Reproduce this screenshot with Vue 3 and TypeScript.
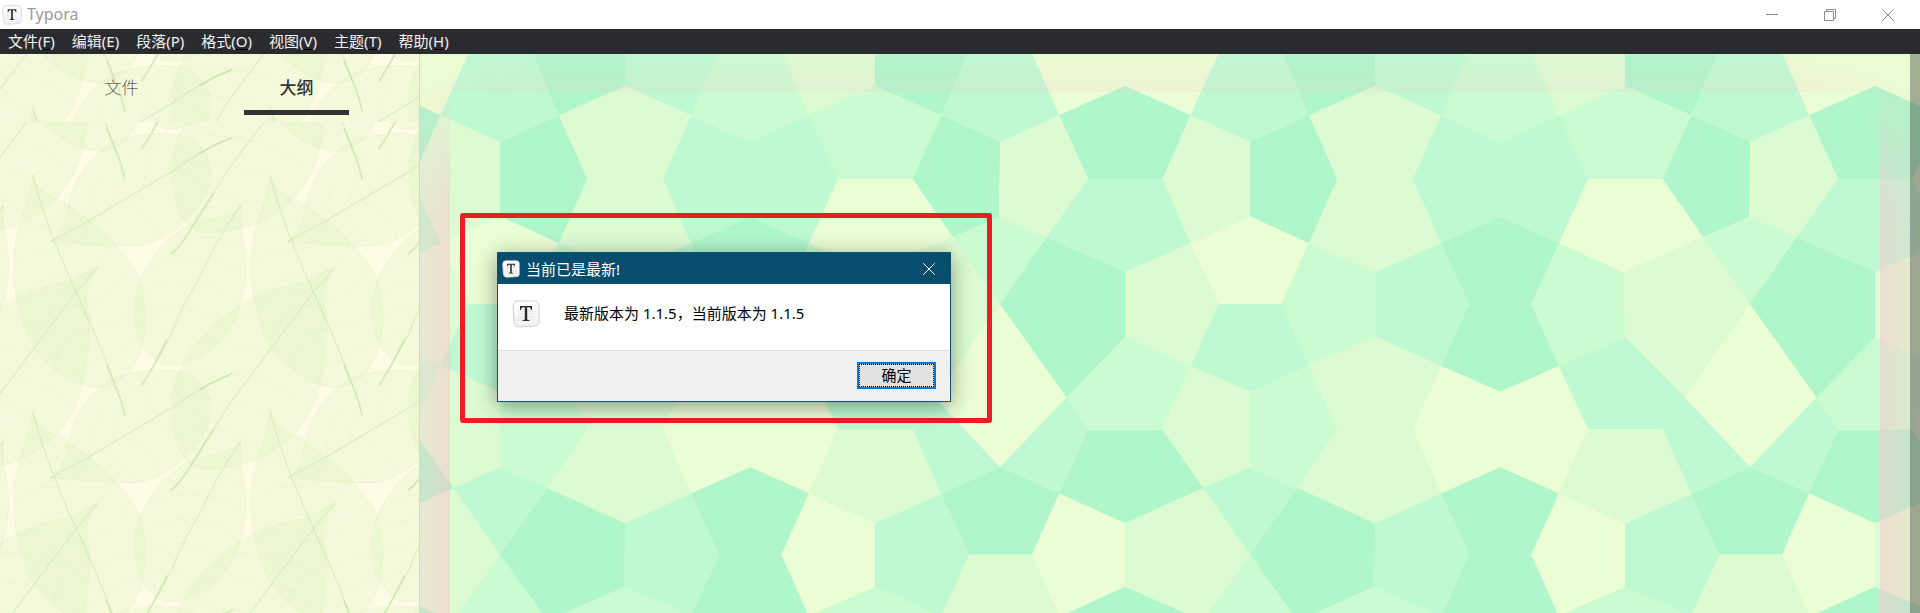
<script setup lang="ts">
import { ref } from 'vue'

type Tone = 'a' | 'b' | 'c' | 'd' | 'e'
interface Cell { tone: Tone; points: string }

const menus = [
  { label: '文件', key: 'F' },
  { label: '编辑', key: 'E' },
  { label: '段落', key: 'P' },
  { label: '格式', key: 'O' },
  { label: '视图', key: 'V' },
  { label: '主题', key: 'T' },
  { label: '帮助', key: 'H' },
]

const tabs = ['文件', '大纲']
const activeTab = ref('大纲')

// One repeat of the mosaic, 1547 x 1568 units.
const cells: Cell[] = [
  { tone: 'e', points: '1280,0 1339,182 1475,100 1610,182 1672,0' },
  { tone: 'b', points: '124,0 63,182 186,256 307,182 250,0' },
  { tone: 'a', points: '250,0 307,182 444,100 444,0' },
  { tone: 'b', points: '444,0 444,100 580,182 640,0' },
  { tone: 'c', points: '640,0 580,182 702,257 823,182 765,0' },
  { tone: 'd', points: '765,0 823,182 959,100 959,0' },
  { tone: 'a', points: '959,0 959,100 1096,182 1154,0' },
  { tone: 'b', points: '1154,0 1096,182 1217,256 1339,182 1280,0' },
  { tone: 'a', points: '1339,182 1475,100 1610,182 1552,359 1399,359' },
  { tone: 'd', points: '63,182 186,256 186,463 63,538 5,359' },
  { tone: 'a', points: '186,256 307,182 366,359 307,538 186,463' },
  { tone: 'd', points: '307,182 444,100 580,182 522,359 580,538 444,620 307,538 366,359' },
  { tone: 'b', points: '580,182 702,257 823,182 883,359 823,538 702,465 580,538 522,359' },
  { tone: 'c', points: '823,182 959,100 1096,182 1037,359 883,359' },
  { tone: 'a', points: '1096,182 1217,256 1215,465 1120,521 1037,359' },
  { tone: 'd', points: '1217,256 1339,182 1399,359 1313,522 1215,465' },
  { tone: 'b', points: '1399,359 1552,359 1610,538 1475,618 1313,522' },
  { tone: 'e', points: '63,538 186,463 307,538 250,708 121,708' },
  { tone: 'c', points: '307,538 444,620 444,797 307,879 250,708' },
  { tone: 'b', points: '444,620 580,538 638,708 580,880 444,797' },
  { tone: 'a', points: '580,538 702,465 823,538 766,708 823,880 702,952 580,880 638,708' },
  { tone: 'c', points: '823,538 957,620 959,797 823,880 766,708' },
  { tone: 'e', points: '883,359 1037,359 1120,521 957,620 823,538' },
  { tone: 'd', points: '957,620 1120,521 1217,708 1082,968 959,797' },
  { tone: 'c', points: '1120,521 1215,465 1313,522 1217,708' },
  { tone: 'a', points: '1313,522 1475,618 1475,799 1354,968 1217,708' },
  { tone: 'd', points: '1475,618 1610,538 1668,708 1610,880 1475,799' },
  { tone: 'b', points: '121,708 250,708 307,879 186,952 63,880' },
  { tone: 'c', points: '1475,799 1610,880 1552,1058 1399,1058 1354,968' },
  { tone: 'd', points: '63,880 186,952 186,1162 90,1220 5,1056' },
  { tone: 'c', points: '186,952 307,879 366,1056 283,1220 186,1162' },
  { tone: 'd', points: '307,879 444,797 580,880 522,1056 580,1235 444,1319 283,1220 366,1056' },
  { tone: 'e', points: '580,880 702,952 823,880 883,1056 823,1235 702,1162 580,1235 522,1056' },
  { tone: 'b', points: '823,880 959,797 1082,968 1037,1056 883,1056' },
  { tone: 'e', points: '1217,708 1354,968 1217,1162 1082,968' },
  { tone: 'b', points: '1082,968 1217,1162 1096,1237 1037,1056' },
  { tone: 'b', points: '1354,968 1399,1058 1339,1235 1217,1162' },
  { tone: 'a', points: '1399,1058 1552,1058 1637,1220 1475,1318 1339,1235' },
  { tone: 'd', points: '883,1056 1037,1056 1096,1237 959,1319 823,1235' },
  { tone: 'b', points: '90,1220 186,1162 283,1220 186,1405' },
  { tone: 'a', points: '283,1220 444,1319 442,1495 320,1568 272,1568 186,1405' },
  { tone: 'c', points: '186,1405 272,1568 100,1568' },
  { tone: 'c', points: '320,1568 442,1495 565,1568' },
  { tone: 'b', points: '444,1319 580,1235 638,1405 583,1568 565,1568 442,1495' },
  { tone: 'a', points: '580,1235 702,1162 823,1235 766,1405 820,1568 583,1568 638,1405' },
  { tone: 'e', points: '823,1235 959,1319 959,1495 837,1568 820,1568 766,1405' },
  { tone: 'c', points: '837,1568 959,1495 1082,1568' },
  { tone: 'b', points: '959,1319 1096,1237 1154,1405 1098,1568 1082,1568 959,1495' },
  { tone: 'a', points: '1096,1237 1217,1162 1339,1235 1283,1405 1154,1405' },
  { tone: 'd', points: '1154,1405 1283,1405 1337,1568 1098,1568' },
  { tone: 'e', points: '1339,1235 1475,1318 1475,1495 1357,1568 1337,1568 1283,1405' },
  { tone: 'a', points: '1357,1568 1475,1495 1599,1568' },
  { tone: 'd', points: '1475,1318 1637,1220 1733,1405 1647,1568 1599,1568 1475,1495' },
]

// One repeat of the leaf wallpaper, 712 x 709 units.
const leaves = [
  {
    outline: 'M150 395C190 370 195 340 200 310C215 220 260 140 345 95C420 65 530 65 570 85C620 110 640 170 632 215C600 320 500 390 420 408C340 415 240 400 150 395Z',
    stem: 'M150 395L270 330L430 235L515 185Q610 115 696 83',
    tip: 'M600 130Q650 98 696 83',
    veins: 'M270 330Q260 240 320 180M340 288Q340 190 400 120M430 235Q430 150 480 85M500 195Q510 130 560 95M300 312Q370 350 400 405M370 270Q450 300 480 385M450 225Q530 240 565 320M530 178Q590 180 620 240',
  },
  {
    outline: 'M98 195C102 240 150 262 180 270C270 330 350 385 415 500C445 580 438 670 420 730C390 800 350 830 300 832C220 830 130 770 90 690C45 600 30 470 48 390C62 310 92 270 98 195Z',
    stem: 'M98 195L125 290Q170 420 230 550Q300 700 345 825Q368 880 374 916',
    tip: 'M320 765L345 825Q368 880 374 916',
    veins: 'M145 345Q80 340 60 370M175 425Q90 410 50 470M210 505Q110 480 60 590M245 585Q140 570 100 690M280 660Q190 650 160 770M315 745Q260 750 240 820M145 345Q200 330 195 270M175 425Q250 400 270 330M210 505Q320 480 335 385M245 585Q370 540 390 460M280 660Q400 620 432 590M315 745Q390 700 428 680',
  },
  {
    outline: 'M722 285C700 325 620 322 560 350C470 400 405 500 402 600C405 680 440 750 500 767C600 765 690 700 722 580C745 500 740 430 722 355Z',
    stem: 'M722 285Q655 380 600 500Q530 620 520 660Q470 755 425 826',
    tip: 'M500 690Q460 775 425 826',
    veins: 'M650 385Q560 370 500 420M618 450Q500 430 450 480M585 520Q480 510 420 560M550 590Q470 590 410 640M520 655Q470 660 440 720M650 385Q700 390 728 420M618 450Q690 460 735 500M585 520Q670 530 715 590M550 590Q620 610 680 660M520 655Q570 690 600 745',
  },
  {
    outline: 'M1005 472C975 480 950 505 920 516C820 530 760 560 700 600C560 700 515 800 515 900C517 980 540 1040 575 1062C610 1085 660 1077 720 1066C850 1030 930 950 962 815C975 740 985 660 978 600C960 560 975 510 1005 472Z',
    stem: 'M1005 472L930 560L810 720L690 880L575 1062Q545 1115 513 1141',
    tip: 'M640 960L575 1062Q545 1115 513 1141',
    veins: 'M930 560Q850 540 770 570M870 640Q780 620 690 620M810 720Q700 700 600 690M750 800Q650 780 545 780M690 880Q600 860 520 860M640 960Q570 950 530 980M930 560Q960 590 978 640M870 640Q930 650 978 720M810 720Q880 720 962 810M750 800Q830 810 930 890M690 880Q780 880 870 980M640 960Q720 950 790 1030',
  },
]
const shifts: [number, number][] = []
for (const x of [-1424, -712, 0, 712]) for (const y of [-745, -36, 673]) shifts.push([x, y])
</script>

<template>
  <div class="window">
    <svg class="defs" aria-hidden="true">
      <defs>
        <linearGradient id="keycap" x1="0" y1="0" x2="0" y2="1">
          <stop offset="0" stop-color="#ffffff" />
          <stop offset="1" stop-color="#f0f0f0" />
        </linearGradient>
        <symbol id="logo" viewBox="0 0 28 28">
          <path d="M6 1H22Q27 1 27 6V22Q27 26 22 26L8 27Q3 27 2 22L1 7Q1 1 6 1Z" fill="url(#keycap)" stroke="#cfcfcf" />
          <path d="M6 11H22M6 14H22M6 17H22M6 20H22" stroke="#e4e4e4" />
          <path d="M8 6H20V10H19.200Q18.700 7.200 17 7.200H15.200V19Q15.200 20.200 17.500 20.200V21H10.500V20.200Q12.800 20.200 12.800 19V7.200H11Q9.300 7.200 8.800 10H8Z" fill="#2c2c2c" />
        </symbol>
        <filter id="fibre" x="0" y="0" width="100%" height="100%">
          <feTurbulence type="fractalNoise" baseFrequency="0.28" numOctaves="2" seed="4" />
          <feColorMatrix values="0 0 0 0 0.99  0 0 0 0 0.99  0 0 0 0 0.9  0 2.2 0 0 -0.85" />
          <feComposite in2="SourceAlpha" operator="in" result="speck" />
          <feMerge>
            <feMergeNode in="SourceGraphic" />
            <feMergeNode in="speck" />
          </feMerge>
        </filter>
        <pattern id="leaves" width="237.330" height="236.330" patternUnits="userSpaceOnUse">
          <g transform="scale(0.33333)">
            <rect width="714" height="711" fill="#fffce6" />
            <g v-for="([x, y], i) in shifts" :key="i" :transform="`translate(${x} ${y})`">
              <g v-for="leaf in leaves" :key="leaf.stem">
                <path :d="leaf.outline" class="leaf" />
                <path :d="leaf.veins" class="vein" />
                <path :d="leaf.stem" class="stem" />
                <path :d="leaf.tip" class="stem-tip" />
              </g>
            </g>
          </g>
        </pattern>
        <pattern id="mosaic" x="-10" y="-4" width="750" height="563" patternUnits="userSpaceOnUse">
          <g transform="scale(0.48481 0.35906)">
            <rect width="1547" height="1568" class="d" />
            <g v-for="x in [-1547, 0]" :key="x" :transform="`translate(${x} 0)`">
              <polygon v-for="(cell, i) in cells" :key="i" :points="cell.points" :class="cell.tone" />
            </g>
          </g>
        </pattern>
      </defs>
    </svg>

    <header class="titlebar">
      <svg class="app-icon" aria-hidden="true"><use href="#logo" /></svg>
      <span class="app-name">Typora</span>
      <div class="controls">
        <button type="button" aria-label="最小化">
          <svg viewBox="0 0 12 12"><path d="M0 5.500H12" /></svg>
        </button>
        <button type="button" aria-label="还原">
          <svg viewBox="0 0 12 12"><path d="M.5 2.500H9.500V11.500H.5ZM2.500 2.500V.5H11.500V9.500H9.500" /></svg>
        </button>
        <button type="button" aria-label="关闭">
          <svg viewBox="0 0 12 12"><path d="M.3 .3L11.700 11.700M11.700 .3L.3 11.700" /></svg>
        </button>
      </div>
    </header>

    <nav class="menubar">
      <button v-for="menu in menus" :key="menu.key" type="button">{{ menu.label }}(<u>{{ menu.key }}</u>)</button>
    </nav>

    <div class="workspace">
      <aside class="sidebar">
        <div class="tabs" role="tablist">
          <svg class="paper" aria-hidden="true"><rect width="100%" height="100%" fill="url(#leaves)" /></svg>
          <button
            v-for="tab in tabs"
            :key="tab"
            type="button"
            role="tab"
            :aria-selected="tab === activeTab"
            :class="{ active: tab === activeTab }"
            @click="activeTab = tab"
          >{{ tab }}</button>
        </div>
        <div class="outline">
          <svg class="paper" aria-hidden="true"><rect width="100%" height="100%" fill="url(#leaves)" /></svg>
        </div>
      </aside>

      <main class="editor">
        <svg class="paper" aria-hidden="true"><rect width="100%" height="100%" fill="url(#mosaic)" /></svg>
        <article class="page"></article>
        <div class="scrollbar"></div>
      </main>
    </div>

    <div class="callout">
      <section class="dialog" role="dialog" aria-labelledby="dialog-title">
        <header class="dialog-title">
          <svg class="dialog-icon" aria-hidden="true"><use href="#logo" /></svg>
          <h1 id="dialog-title">当前已是最新!</h1>
          <button type="button" aria-label="关闭">
            <svg viewBox="0 0 12 12"><path d="M.3 .3L11.700 11.700M11.700 .3L.3 11.700" /></svg>
          </button>
        </header>
        <div class="dialog-body">
          <svg class="message-icon" aria-hidden="true"><use href="#logo" /></svg>
          <p>最新版本为 1.1.5，当前版本为 1.1.5</p>
        </div>
        <footer class="dialog-footer">
          <button type="button"><span>确定</span></button>
        </footer>
      </section>
    </div>
  </div>
</template>

<style>
body {
  margin: 0;
}
</style>

<style scoped>
.window {
  position: relative;
  display: flex;
  flex-direction: column;
  min-height: 100vh;
  overflow: hidden;
  font-family: "Noto Sans", "Noto Sans CJK SC", sans-serif;
  font-size: 15px;
}
button {
  margin: 0;
  padding: 0;
  border: 0;
  background: none;
  font: inherit;
  color: inherit;
}
.defs {
  position: absolute;
  width: 0;
  height: 0;
}
.titlebar {
  display: flex;
  align-items: center;
  height: 29px;
  padding: 0 3px 0 2px;
  background: #fff;
}
.app-icon {
  width: 20px;
  height: 20px;
}
.app-name {
  flex: 1;
  margin-left: 5px;
  font-size: 16px;
  line-height: 29px;
  color: #999;
}
.controls {
  display: flex;
}
.controls button {
  display: grid;
  place-items: center;
  width: 58px;
  height: 29px;
}
.controls svg {
  width: 12px;
  height: 12px;
  fill: none;
  stroke: #8c8c8c;
}
.menubar {
  display: flex;
  gap: 1px;
  height: 25px;
  background: #2a2b2f;
  color: #f2f2f2;
}
.menubar button {
  padding: 0 8px;
  line-height: 25px;
}
.menubar u {
  text-decoration-color: #000;
  text-underline-offset: 2px;
}
.workspace {
  display: flex;
  flex: 1;
}
.paper {
  position: absolute;
  inset: 0;
  z-index: -1;
  width: 100%;
  height: 100%;
}
.leaf {
  fill: rgba(204, 236, 172, 0.22);
  stroke: rgba(178, 220, 150, 0.3);
  stroke-width: 2;
  filter: url(#fibre);
}
.vein {
  fill: none;
  stroke: rgba(188, 224, 160, 0.22);
  stroke-width: 2;
}
.stem {
  fill: none;
  stroke: rgba(165, 215, 140, 0.4);
  stroke-width: 3;
}
.stem-tip {
  fill: none;
  stroke: rgba(165, 215, 135, 0.4);
  stroke-width: 5;
  stroke-linecap: round;
}
.a { fill: #aff6cb; }
.b { fill: #bef9d1; }
.c { fill: #cbfbd0; }
.d { fill: #dcfbd3; }
.e { fill: #ebfdd5; }
.sidebar {
  display: flex;
  flex-direction: column;
  box-sizing: border-box;
  width: 420px;
  border-right: 1px solid #d3d9be;
}
.tabs {
  position: relative;
  z-index: 0;
  display: flex;
  height: 68px;
  padding: 0 35px 0 34px;
}
.tabs button {
  position: relative;
  flex: 1;
  font-size: 17px;
  font-weight: 300;
  line-height: 68px;
  color: #666;
}
.tabs .active {
  font-weight: 500;
  color: #333;
}
.tabs .active::after {
  content: "";
  position: absolute;
  right: 20%;
  bottom: 7px;
  left: 20%;
  height: 5px;
  background: #333;
}
.outline {
  position: relative;
  z-index: 0;
  flex: 1;
}
.editor {
  position: relative;
  z-index: 0;
  display: flex;
  flex: 1;
  overflow: hidden;
}
.page {
  flex: 1;
  margin: 38px 30px 0;
  margin-bottom: -150px;
  box-shadow: 0 50px 100px pink;
}
.scrollbar {
  width: 10px;
  background: rgba(0, 0, 0, 0.3);
}
.callout {
  position: absolute;
  top: 213px;
  left: 460px;
  padding: 34px 36px 16px 32px;
  border: 5px solid #ef1c24;
  border-radius: 3px;
}
.dialog {
  width: 452px;
  border: 1px solid #0d5377;
  background: #fff;
  box-shadow: 0 4px 20px rgba(0, 0, 0, 0.4);
}
.dialog-title {
  display: flex;
  align-items: center;
  height: 31px;
  padding-left: 4px;
  background: #074d6e;
  color: #fff;
}
.dialog-icon {
  width: 18px;
  height: 18px;
}
.dialog-title h1 {
  flex: 1;
  margin: 0 0 0 6px;
  font-size: 15px;
  font-weight: 400;
  line-height: 30px;
}
.dialog-title button {
  display: grid;
  place-items: center;
  width: 42px;
  height: 31px;
}
.dialog-title button svg {
  width: 12px;
  height: 12px;
  fill: none;
  stroke: #fff;
}
.dialog-body {
  display: flex;
  align-items: flex-start;
  height: 50px;
  padding: 16px 14px 0;
}
.message-icon {
  width: 28px;
  height: 28px;
}
.dialog-body p {
  margin: 0 0 0 24px;
  line-height: 26px;
}
.dialog-footer {
  display: flex;
  justify-content: flex-end;
  height: 27px;
  padding: 11px 14px 12px;
  border-top: 1px solid #dfdfdf;
  background: #f0f0f0;
}
.dialog-footer button {
  box-sizing: border-box;
  width: 79px;
  height: 27px;
  border: 2px solid #0078d7;
  background: #e1e1e1;
}
.dialog-footer span {
  display: block;
  border: 1px dotted #000;
  line-height: 21px;
}
</style>
